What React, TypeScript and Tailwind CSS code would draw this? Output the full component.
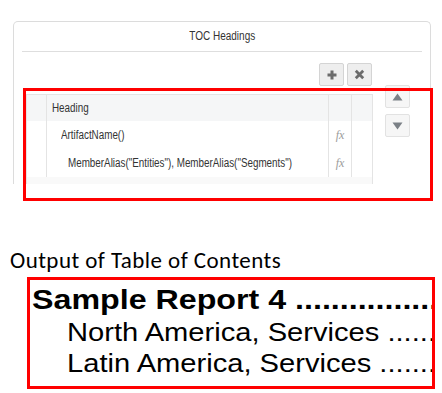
import React from "react";

const uiFont = { fontFamily: '"Liberation Sans", Arial, sans-serif' };

function PlusIcon() {
  return (
    <svg width="12" height="12" viewBox="0 0 12 12">
      <path d="M6 1.5v9M1.5 6h9" stroke="#6b6b6b" strokeWidth="3" />
    </svg>
  );
}

function XIcon() {
  return (
    <svg width="11" height="11" viewBox="0 0 11 11">
      <path d="M1.8 1.8l7.4 7.4M9.2 1.8l-7.4 7.4" stroke="#6b6b6b" strokeWidth="2.8" />
    </svg>
  );
}

function Tri({ down }: { down?: boolean }) {
  return (
    <svg width="11" height="8" viewBox="0 0 11 8">
      {down ? <path d="M0.5 0.5h10L5.5 7.5z" fill="#7b8086" /> : <path d="M5.5 0.5l5 7h-10z" fill="#7b8086" />}
    </svg>
  );
}

function Fx() {
  return (
    <span className="italic text-[12px] text-[#9b9b9b]" style={{ fontFamily: '"Liberation Serif", serif' }}>
      fx
    </span>
  );
}

const rowCols = "grid grid-cols-[20px_282px_23px_21px]";

export default function App() {
  const dots = ".".repeat(40);
  return (
    <div className="relative w-[442px] h-[393px] bg-white overflow-hidden">
      <div className="pt-[21px] pl-[13px]" style={uiFont}>
        <div className="w-[418px] h-[163px] border border-b-0 border-[#dcdcdc] rounded-t-[5px] px-[8px]">
          <div className="h-[30px] border-b border-[#dedede] flex items-center justify-center text-[12.5px] text-[#333333]">
            <span className="inline-block origin-center scale-x-[0.8] whitespace-nowrap">TOC Headings</span>
          </div>
          <div className="pl-[4px] flex gap-[12px]">
            <div className="w-[347px]">
              <div className="mt-[11px] h-[23px] flex justify-end gap-[3px] pr-[1px]">
                <div className="w-[25px] h-[23px] bg-[#eeeeee] border border-[#d4d4d4] rounded-[2px] flex items-center justify-center">
                  <PlusIcon />
                </div>
                <div className="w-[25px] h-[23px] bg-[#eeeeee] border border-[#d4d4d4] rounded-[2px] flex items-center justify-center">
                  <XIcon />
                </div>
              </div>
              <div className="mt-[8px] border-t border-l border-[#e4e4e4] text-[12px] text-[#333333]">
                <div className={`${rowCols} h-[26px] bg-[#f5f6f7]`}>
                  <div className="border-r border-[#e4e4e4]" />
                  <div className="border-r border-[#e4e4e4] flex items-center pl-[5px]">
                    <span className="inline-block origin-left scale-x-[0.82] whitespace-nowrap">Heading</span>
                  </div>
                  <div className="border-r border-[#e4e4e4]" />
                  <div className="border-r border-[#e4e4e4]" />
                </div>
                <div className={`${rowCols} h-[28px] bg-white`}>
                  <div className="border-r border-[#e4e4e4]" />
                  <div className="border-r border-[#e4e4e4] flex items-center pl-[14px]">
                    <span className="inline-block origin-left scale-x-[0.82] whitespace-nowrap">ArtifactName()</span>
                  </div>
                  <div className="border-r border-[#e4e4e4] flex items-center justify-center">
                    <Fx />
                  </div>
                  <div className="border-r border-[#e4e4e4]" />
                </div>
                <div className={`${rowCols} h-[28px] bg-white`}>
                  <div className="border-r border-[#e4e4e4]" />
                  <div className="border-r border-[#e4e4e4] flex items-center pl-[21px] overflow-hidden">
                    <span className="inline-block origin-left scale-x-[0.82] whitespace-nowrap">
                      MemberAlias("Entities"), MemberAlias("Segments")
                    </span>
                  </div>
                  <div className="border-r border-[#e4e4e4] flex items-center justify-center">
                    <Fx />
                  </div>
                  <div className="border-r border-[#e4e4e4]" />
                </div>
                <div className="h-[7px] bg-[#f9f9f9] border-r border-[#e4e4e4]" />
              </div>
            </div>
            <div className="w-[25px] pt-[33px] flex flex-col gap-[6px]">
              <div className="w-[25px] h-[23px] bg-[#f6f6f6] border border-[#e2e2e2] rounded-[2px] flex items-center justify-center">
                <Tri />
              </div>
              <div className="w-[25px] h-[23px] bg-[#f6f6f6] border border-[#e2e2e2] rounded-[2px] flex items-center justify-center">
                <Tri down />
              </div>
            </div>
          </div>
        </div>
      </div>

      <div
        className="mt-[62px] pl-[10px] h-[28px] leading-[28px] text-[23px] tracking-[0.45px] text-black whitespace-nowrap"
        style={{ fontFamily: 'Carlito, Lato, "Open Sans", sans-serif' }}
      >
        Output of Table of Contents
      </div>

      <div
        className="mt-[3px] ml-[27px] w-[408px] h-[112px] border-[3px] border-[#ff0000] overflow-hidden pt-[3px] text-black"
        style={{ fontFamily: '"Liberation Sans", Arial, sans-serif' }}
      >
        <div className="w-[340px] ml-[2px] h-[34px] leading-[34px] text-[28px] font-bold whitespace-nowrap overflow-visible origin-left scale-x-[1.15]">
          Sample Report 4 {dots}
        </div>
        <div className="w-[330px] ml-[37px] h-[31px] leading-[31px] text-[26px] whitespace-nowrap origin-left scale-x-[1.12]">
          North America, Services {dots}
        </div>
        <div className="w-[330px] ml-[37px] h-[31px] leading-[31px] text-[26px] whitespace-nowrap origin-left scale-x-[1.12]">
          Latin America, Services {dots}
        </div>
      </div>

      <div className="absolute left-[23px] top-[88px] w-[410px] h-[113px] border-[3px] border-[#ff0000] pointer-events-none" />
    </div>
  );
}
